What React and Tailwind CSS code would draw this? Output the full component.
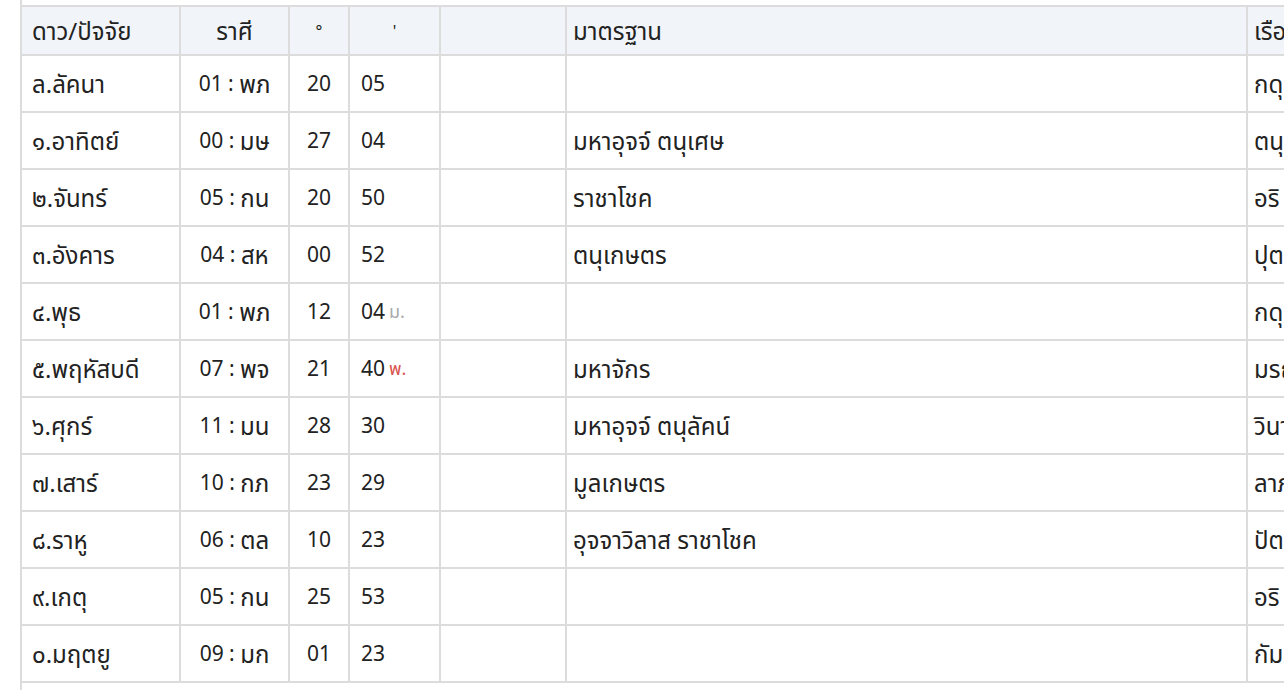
import React from 'react';

const rows = [
  { name: 'ล.ลัคนา', num: '01', sign: 'พภ', deg: '20', min: '05', std: '', house: 'กดุมภะ' },
  { name: '๑.อาทิตย์', num: '00', sign: 'มษ', deg: '27', min: '04', std: 'มหาอุจจ์ ตนุเศษ', house: 'ตนุ' },
  { name: '๒.จันทร์', num: '05', sign: 'กน', deg: '20', min: '50', std: 'ราชาโชค', house: 'อริ' },
  { name: '๓.อังคาร', num: '04', sign: 'สห', deg: '00', min: '52', std: 'ตนุเกษตร', house: 'ปุตตะ' },
  { name: '๔.พุธ', num: '01', sign: 'พภ', deg: '12', min: '04', tag: 'ม.', tagColor: 'gray', std: '', house: 'กดุมภะ' },
  { name: '๕.พฤหัสบดี', num: '07', sign: 'พจ', deg: '21', min: '40', tag: 'พ.', tagColor: 'red', std: 'มหาจักร', house: 'มรณะ' },
  { name: '๖.ศุกร์', num: '11', sign: 'มน', deg: '28', min: '30', std: 'มหาอุจจ์ ตนุลัคน์', house: 'วินาศ' },
  { name: '๗.เสาร์', num: '10', sign: 'กภ', deg: '23', min: '29', std: 'มูลเกษตร', house: 'ลาภะ' },
  { name: '๘.ราหู', num: '06', sign: 'ตล', deg: '10', min: '23', std: 'อุจจาวิลาส ราชาโชค', house: 'ปัตนิ' },
  { name: '๙.เกตุ', num: '05', sign: 'กน', deg: '25', min: '53', std: '', house: 'อริ' },
  { name: '๐.มฤตยู', num: '09', sign: 'มก', deg: '01', min: '23', std: '', house: 'กัมมะ' },
];

const cell = 'border-r-2 border-b-2 border-[#dcdcdc] flex items-center whitespace-nowrap';

export default function App() {
  return (
    <div className="w-[1284px] h-[690px] overflow-hidden bg-white text-[24px] text-[#222]" style={{ fontFamily: '"Noto Sans", "Noto Sans Thai", Tahoma, sans-serif' }}>
      <div className="ml-[20px] h-full border-l-2 border-[#dcdcdc] pt-[5px]">
        <div className="grid grid-cols-[159px_109px_60px_91px_126px_681px_140px] w-max border-t-2 border-[#dcdcdc]">
          {/* header */}
          <div className={`${cell} h-[49px] bg-[#f1f5f9] pl-[10px]`}>ดาว/ปัจจัย</div>
          <div className={`${cell} h-[49px] bg-[#f1f5f9] justify-center`}>ราศี</div>
          <div className={`${cell} h-[49px] bg-[#f1f5f9] justify-center text-[16px]`}>°</div>
          <div className={`${cell} h-[49px] bg-[#f1f5f9] justify-center text-[16px]`}>'</div>
          <div className={`${cell} h-[49px] bg-[#f1f5f9]`}></div>
          <div className={`${cell} h-[49px] bg-[#f1f5f9] pl-[6px]`}>มาตรฐาน</div>
          <div className={`${cell} h-[49px] bg-[#f1f5f9] pl-[6px]`}>เรือน</div>

          {rows.map((r) => (
            <React.Fragment key={r.name}>
              <div className={`${cell} h-[57px] pl-[10px]`}>{r.name}</div>
              <div className={`${cell} h-[57px] justify-center`}>
                <span className="text-[21px]">{r.num} :&nbsp;</span>
                <span>{r.sign}</span>
              </div>
              <div className={`${cell} h-[57px] justify-center text-[21px]`}>{r.deg}</div>
              <div className={`${cell} h-[57px] pl-[11px] gap-1`}>
                <span className="text-[21px]">{r.min}</span>
                {r.tag && (
                  <span className={`text-[18px] ${r.tagColor === 'red' ? 'text-[#d9534f]' : 'text-[#aaaaaa]'}`}>{r.tag}</span>
                )}
              </div>
              <div className={`${cell} h-[57px]`}></div>
              <div className={`${cell} h-[57px] pl-[6px]`}>{r.std}</div>
              <div className={`${cell} h-[57px] pl-[6px]`}>{r.house}</div>
            </React.Fragment>
          ))}
        </div>
      </div>
    </div>
  );
}
